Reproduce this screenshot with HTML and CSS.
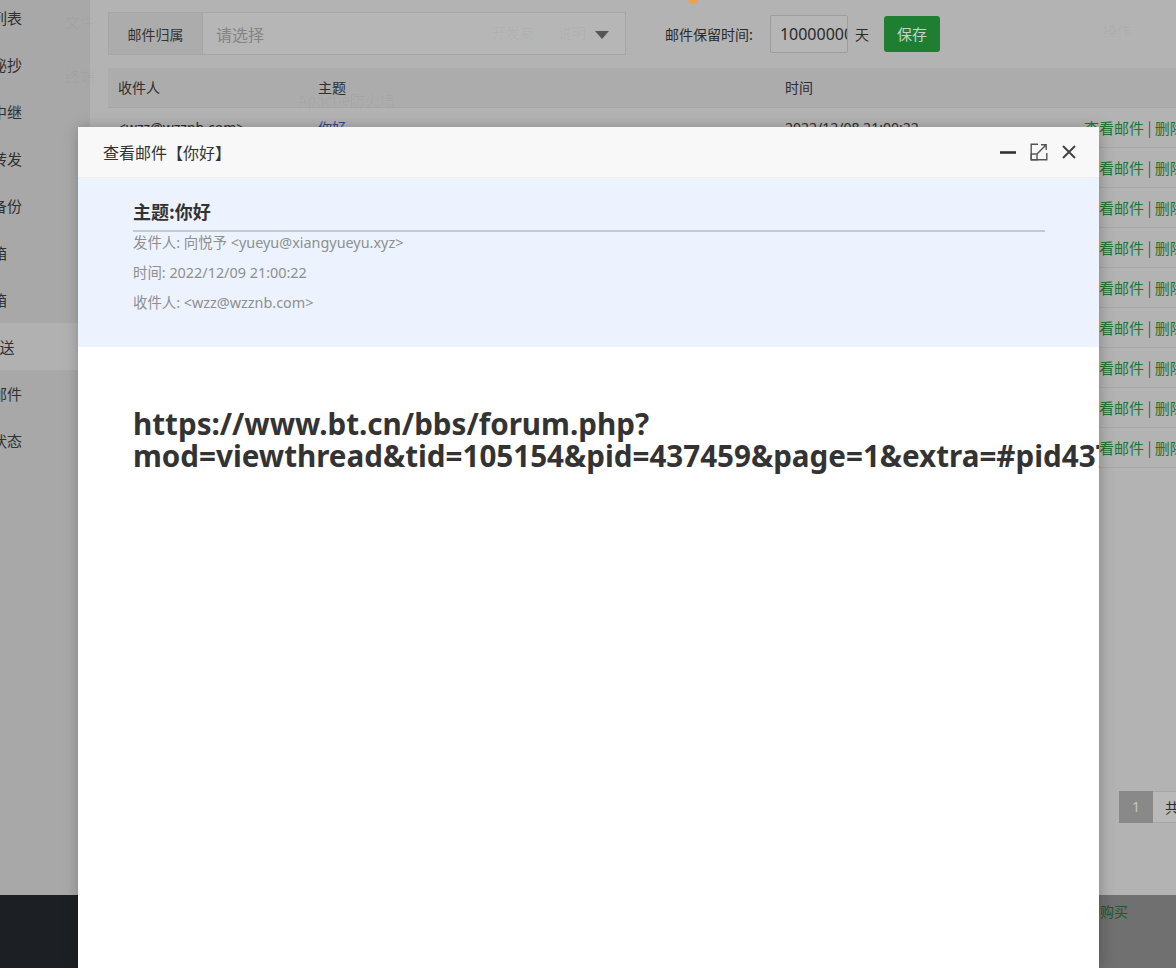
FILE: index.html
```html
<!DOCTYPE html>
<html lang="zh-CN">
<head>
<meta charset="utf-8">
<title>查看邮件</title>
<link rel="stylesheet" href="styles.css">
</head>
<body>
<div class="page">
  <div class="app">
    <aside class="side">
      <ul class="side-list">
        <li class="side-item">邮箱列表</li>
        <li class="side-item">发件秘抄</li>
        <li class="side-item">邮件中继</li>
        <li class="side-item">邮件转发</li>
        <li class="side-item">数据备份</li>
        <li class="side-item">收箱</li>
        <li class="side-item">发箱</li>
        <li class="side-item active">群发送</li>
        <li class="side-item">发送邮件</li>
        <li class="side-item">服务状态</li>
      </ul>
    </aside>
    <main class="main">
      <div class="toolbar">
        <div class="select">
          <span class="select-label">邮件归属</span>
          <span class="select-field">请选择<i class="caret"></i></span>
        </div>
        <span class="keep-label">邮件保留时间:</span>
        <span class="keep-input">10000000</span>
        <span class="keep-unit">天</span>
        <span class="btn-save">保存</span>
      </div>
      <table class="mail-table">
        <thead>
          <tr><th class="c1">收件人</th><th class="c2">主题</th><th class="c3">时间</th><th class="c4"></th></tr>
        </thead>
        <tbody>
          <tr><td>&lt;wzz@wzznb.com&gt;</td><td class="subj">你好</td><td>2022/12/08 21:00:22</td><td class="ops"><a>查看邮件</a> | <a>删除</a></td></tr>
          <tr><td>&lt;wzz@wzznb.com&gt;</td><td class="subj">你好</td><td>2022/12/08 20:41:10</td><td class="ops"><a>查看邮件</a> | <a>删除</a></td></tr>
          <tr><td>&lt;wzz@wzznb.com&gt;</td><td class="subj">你好</td><td>2022/12/08 20:30:02</td><td class="ops"><a>查看邮件</a> | <a>删除</a></td></tr>
          <tr><td>&lt;wzz@wzznb.com&gt;</td><td class="subj">你好</td><td>2022/12/08 20:12:45</td><td class="ops"><a>查看邮件</a> | <a>删除</a></td></tr>
          <tr><td>&lt;wzz@wzznb.com&gt;</td><td class="subj">你好</td><td>2022/12/08 19:58:31</td><td class="ops"><a>查看邮件</a> | <a>删除</a></td></tr>
          <tr><td>&lt;wzz@wzznb.com&gt;</td><td class="subj">你好</td><td>2022/12/08 19:40:19</td><td class="ops"><a>查看邮件</a> | <a>删除</a></td></tr>
          <tr><td>&lt;wzz@wzznb.com&gt;</td><td class="subj">你好</td><td>2022/12/08 19:22:07</td><td class="ops"><a>查看邮件</a> | <a>删除</a></td></tr>
          <tr><td>&lt;wzz@wzznb.com&gt;</td><td class="subj">你好</td><td>2022/12/08 19:01:54</td><td class="ops"><a>查看邮件</a> | <a>删除</a></td></tr>
          <tr><td>&lt;wzz@wzznb.com&gt;</td><td class="subj">你好</td><td>2022/12/08 18:47:33</td><td class="ops"><a>查看邮件</a> | <a>删除</a></td></tr>
        </tbody>
      </table>
      <div class="pager">
        <span class="pg-cur">1</span>
        <span class="pg-info">共1页</span>
      </div>
    </main>
  </div>
  <div class="footbar">
    <div class="foot-dark"></div>
    <div class="foot-rest"><span class="buy">立即购买</span></div>
  </div>

  <div class="ghost">
    <span class="g g-file">文件</span>
    <span class="g g-term">终端</span>
    <span class="g g-apache">Apache防火墙</span>
    <span class="g g-dev">开发商</span>
    <span class="g g-desc-h">说明</span>
    <span class="g g-op">操作</span>
    <span class="dot"></span>
  </div>

  <div class="modal">
    <div class="modal-head">
      <span class="modal-title">查看邮件【你好】</span>
      <div class="modal-tools">
        <svg class="ic" width="18" height="18" viewBox="0 0 18 18"><path d="M1 9.5H17" stroke="#333" stroke-width="2.6"/></svg>
        <svg class="ic" width="18" height="18" viewBox="0 0 18 18" fill="none" stroke="#555" stroke-width="1.4"><path d="M8 1.2H1.2V16.8H16.8V10"/><rect x="1.2" y="11" width="5.8" height="5.8"/><path d="M7 11L16.2 1.8M11 1.8H16.2V7"/></svg>
        <svg class="ic" width="16" height="16" viewBox="0 0 16 16" stroke="#444" stroke-width="2"><path d="M2 2L14 14M14 2L2 14"/></svg>
      </div>
    </div>
    <div class="mail-head">
      <div class="mail-subj">主题:你好</div>
      <div class="mail-line">发件人: 向悦予 &lt;yueyu@xiangyueyu.xyz&gt;</div>
      <div class="mail-line">时间: 2022/12/09 21:00:22</div>
      <div class="mail-line">收件人: &lt;wzz@wzznb.com&gt;</div>
    </div>
    <div class="mail-body">
      <p class="url">https://www.bt.cn/bbs/forum.php?<br>mod=viewthread&amp;tid=105154&amp;pid=437459&amp;page=1&amp;extra=#pid437459</p>
    </div>
  </div>
</div>
</body>
</html>
```

FILE: styles.css
```css
* { box-sizing: border-box; }
html, body { margin: 0; padding: 0; }
body {
  width: 1176px;
  height: 968px;
  overflow: hidden;
  font-family: "Noto Sans", "Noto Sans CJK SC", sans-serif;
  font-size: 14px;
  color: #2e2e2e;
  background: #b3b3b3;
}
.page { position: relative; width: 1176px; height: 968px; overflow: hidden; }

.app { display: flex; height: 895px; }

.side {
  width: 90px;
  flex: none;
  background: #a8a8a8;
  overflow: hidden;
}
.side-list {
  list-style: none;
  margin: -6px 0 0 -88px;
  padding: 0;
  width: 178px;
}
.side-item {
  height: 47px;
  line-height: 47px;
  padding-right: 18px;
  text-align: center;
  font-size: 15px;
  color: #303030;
  white-space: nowrap;
  font-family: "Noto Sans CJK SC", sans-serif;
}
.side-item.active { background: #b1b1b1; }

.main {
  flex: 1;
  min-width: 0;
  padding: 12px 0 0 18px;
  background: #b3b3b3;
}

.toolbar { display: flex; align-items: center; height: 43px; white-space: nowrap; }
.select { display: flex; height: 43px; border: 1px solid #a6a6a6; flex: none; }
.select-label {
  width: 94px;
  background: #acacac;
  border-right: 1px solid #a6a6a6;
  display: flex; align-items: center; justify-content: center;
  font-size: 14px; color: #333;
  font-family: "Noto Sans CJK SC", sans-serif;
}
.select-field {
  width: 422px;
  background: #b6b6b6;
  display: flex; align-items: center;
  padding-left: 13px;
  font-size: 16px; color: #848484;
  position: relative;
  font-family: "Noto Sans CJK SC", sans-serif;
}
.caret {
  position: absolute;
  right: 16px; top: 18px;
  width: 0; height: 0;
  border-left: 7px solid transparent;
  border-right: 7px solid transparent;
  border-top: 8px solid #555;
}
.keep-label { margin-left: 39px; font-size: 14px; color: #2a2a2a; font-family: "Noto Sans CJK SC", sans-serif; }
.keep-input {
  margin-left: 17px;
  width: 78px; height: 38px;
  flex: none;
  border: 1px solid #9d9d9d;
  border-radius: 2px;
  background: #b6b6b6;
  display: flex; align-items: center;
  padding-left: 9px;
  overflow: hidden;
  font-size: 16px; color: #2a2a2a;
  font-family: "Noto Sans", sans-serif;
}
.keep-unit { margin-left: 7px; font-size: 14px; color: #2a2a2a; font-family: "Noto Sans CJK SC", sans-serif; }
.btn-save {
  margin-left: 15px;
  width: 56px; height: 36px;
  flex: none;
  background: #1e7f33;
  border-radius: 3px;
  color: #c6d4c8;
  font-size: 15px;
  display: flex; align-items: center; justify-content: center;
  font-family: "Noto Sans CJK SC", sans-serif;
}

.mail-table {
  margin-top: 13px;
  width: 1090px;
  border-collapse: collapse;
  table-layout: fixed;
  font-size: 14px;
  font-family: "Noto Sans", "Noto Sans CJK SC", sans-serif;
}
.mail-table th {
  height: 39px;
  background: #acacac;
  text-align: left;
  font-weight: normal;
  padding: 0 10px;
  color: #2e2e2e;
  border-bottom: 1px solid #a6a6a6;
}
.c1 { width: 200px; }
.c2 { width: 467px; }
.c3 { width: 300px; }
.c4 { width: 123px; }
.mail-table td {
  height: 40px;
  padding: 0 10px;
  border-bottom: 1px solid #a6a6a6;
  white-space: nowrap;
  overflow: hidden;
  color: #2e2e2e;
}
.mail-table td.subj { color: #2b4c84; }
.mail-table td.ops { color: #555; padding-left: 9px; overflow: visible; font-size: 15px; font-family: "Noto Sans CJK SC", sans-serif; }
.ops a { color: #1f7430; }

.pager { display: flex; margin: 323px 0 0 1011px; height: 32px; width: 200px; }
.pg-cur {
  flex: none;
  width: 34px; height: 32px;
  background: #898989;
  color: #c4c4c4;
  display: flex; align-items: center; justify-content: center;
  font-size: 14px;
}
.pg-info {
  flex: none;
  height: 32px;
  padding: 0 12px;
  border: 1px solid #a6a6a6;
  border-left: none;
  background: #b9b9b9;
  display: flex; align-items: center;
  font-size: 14px; color: #2e2e2e;
  white-space: nowrap;
  font-family: "Noto Sans CJK SC", sans-serif;
}

.footbar { display: flex; height: 73px; }
.foot-dark { width: 180px; background: #1c2024; }
.foot-rest { flex: 1; background: #707070; padding: 6px 0 0 892px; }
.buy { color: #1c5a2a; font-size: 14px; white-space: nowrap; font-family: "Noto Sans CJK SC", sans-serif; }

/* faint ghost of the page underneath (transition artefact) */
.ghost { position: absolute; left: 0; top: 0; width: 1176px; height: 895px; pointer-events: none; }
.g { position: absolute; color: rgba(0,0,0,0.045); font-size: 14px; white-space: nowrap; line-height: 22px; font-family: "Noto Sans CJK SC", sans-serif; }
.g-file { left: 65px; top: 11px; font-size: 15px; }
.g-term { left: 65px; top: 65px; font-size: 15px; }
.g-apache { left: 298px; top: 89px; font-size: 15px; }
.g-dev { left: 492px; top: 21px; }
.g-desc-h { left: 558px; top: 21px; }
.g-op { left: 1103px; top: 19px; }
.dot { position: absolute; left: 688px; top: -6px; width: 10px; height: 10px; border-radius: 50%; background: #f0a24a; }

/* modal dialog */
.modal {
  position: absolute;
  left: 78px; top: 127px;
  width: 1021px; height: 841px;
  background: #fff;
  box-shadow: 1px 1px 14px rgba(0,0,0,0.25);
  overflow: hidden;
}
.modal-head {
  height: 51px;
  background: #f8f8f8;
  border-bottom: 1px solid #eee;
  display: flex; align-items: center; justify-content: space-between;
  padding: 0 22px 0 25px;
}
.modal-title { font-size: 16px; color: #333; font-family: "Noto Sans CJK SC", sans-serif; }
.modal-tools { display: flex; align-items: center; gap: 13px; }
.ic { display: block; }

.mail-head {
  background: #ecf3fe;
  height: 169px;
  padding: 21px 54px 0 55px;
}
.mail-subj {
  font-size: 18px;
  font-weight: bold;
  line-height: 25px;
  color: #333;
  padding-bottom: 6px;
  border-bottom: 2px solid #c5c9ce;
  font-family: "Noto Sans CJK SC", sans-serif;
}
.mail-line {
  font-size: 14.4px;
  line-height: 22px;
  margin-bottom: 8px;
  color: #8f8f8f;
  white-space: nowrap;
}
.mail-body { padding: 61px 0 0 55px; }
.url {
  margin: 0;
  font-family: "Noto Sans", sans-serif;
  font-weight: bold;
  font-size: 29.6px;
  line-height: 32px;
  color: #333;
  white-space: nowrap;
}
```
